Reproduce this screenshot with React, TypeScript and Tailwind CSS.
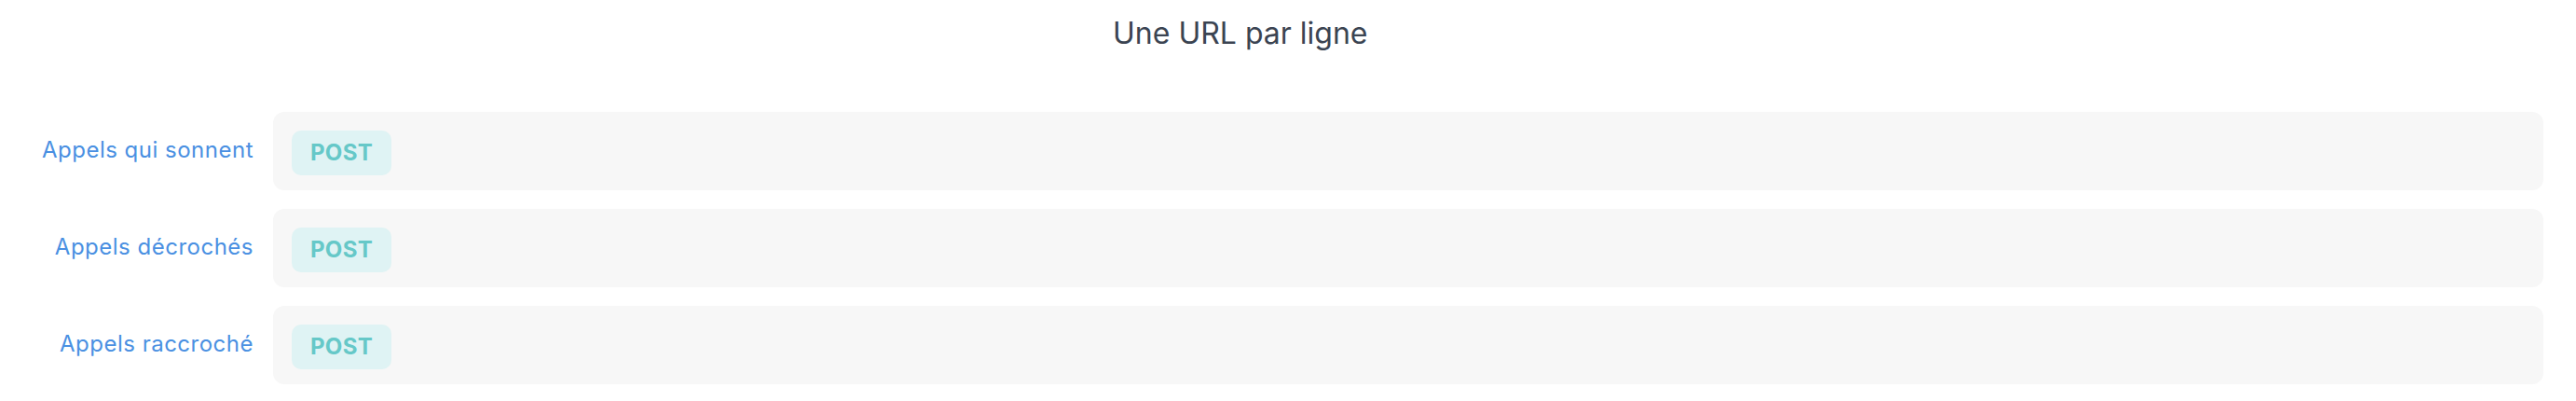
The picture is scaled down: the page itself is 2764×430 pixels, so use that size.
import { type FC } from 'react';

const rows = ['Appels qui sonnent', 'Appels décrochés', 'Appels raccroché'];

const App: FC = () => {
  return (
    <div className="w-[2764px] h-[430px] bg-white font-['Inter',sans-serif]">
      <div className="pt-[12px] pl-[1194px] text-[32px] leading-[48px] text-[#3b4452]">
        Une URL par ligne
      </div>

      <div className="mt-[60px] flex flex-col gap-[20px] pr-[35px]">
        {rows.map((label) => (
          <div key={label} className="flex items-start">
            <div className="w-[293px] shrink-0 pt-[23px] pr-[21px] text-right text-[24px] leading-[36px] tracking-[0.5px] text-[#4a90e2]">
              {label}
            </div>
            <div className="flex-1 h-[84px] rounded-[12px] bg-[#f7f7f7] p-[20px]">
              <span className="inline-flex items-center h-[48px] px-[20px] rounded-[10px] bg-[#dff3f4] text-[24px] font-bold tracking-[0.3px] text-[#66c8c8]">
                POST
              </span>
            </div>
          </div>
        ))}
      </div>
    </div>
  );
};

export default App;
